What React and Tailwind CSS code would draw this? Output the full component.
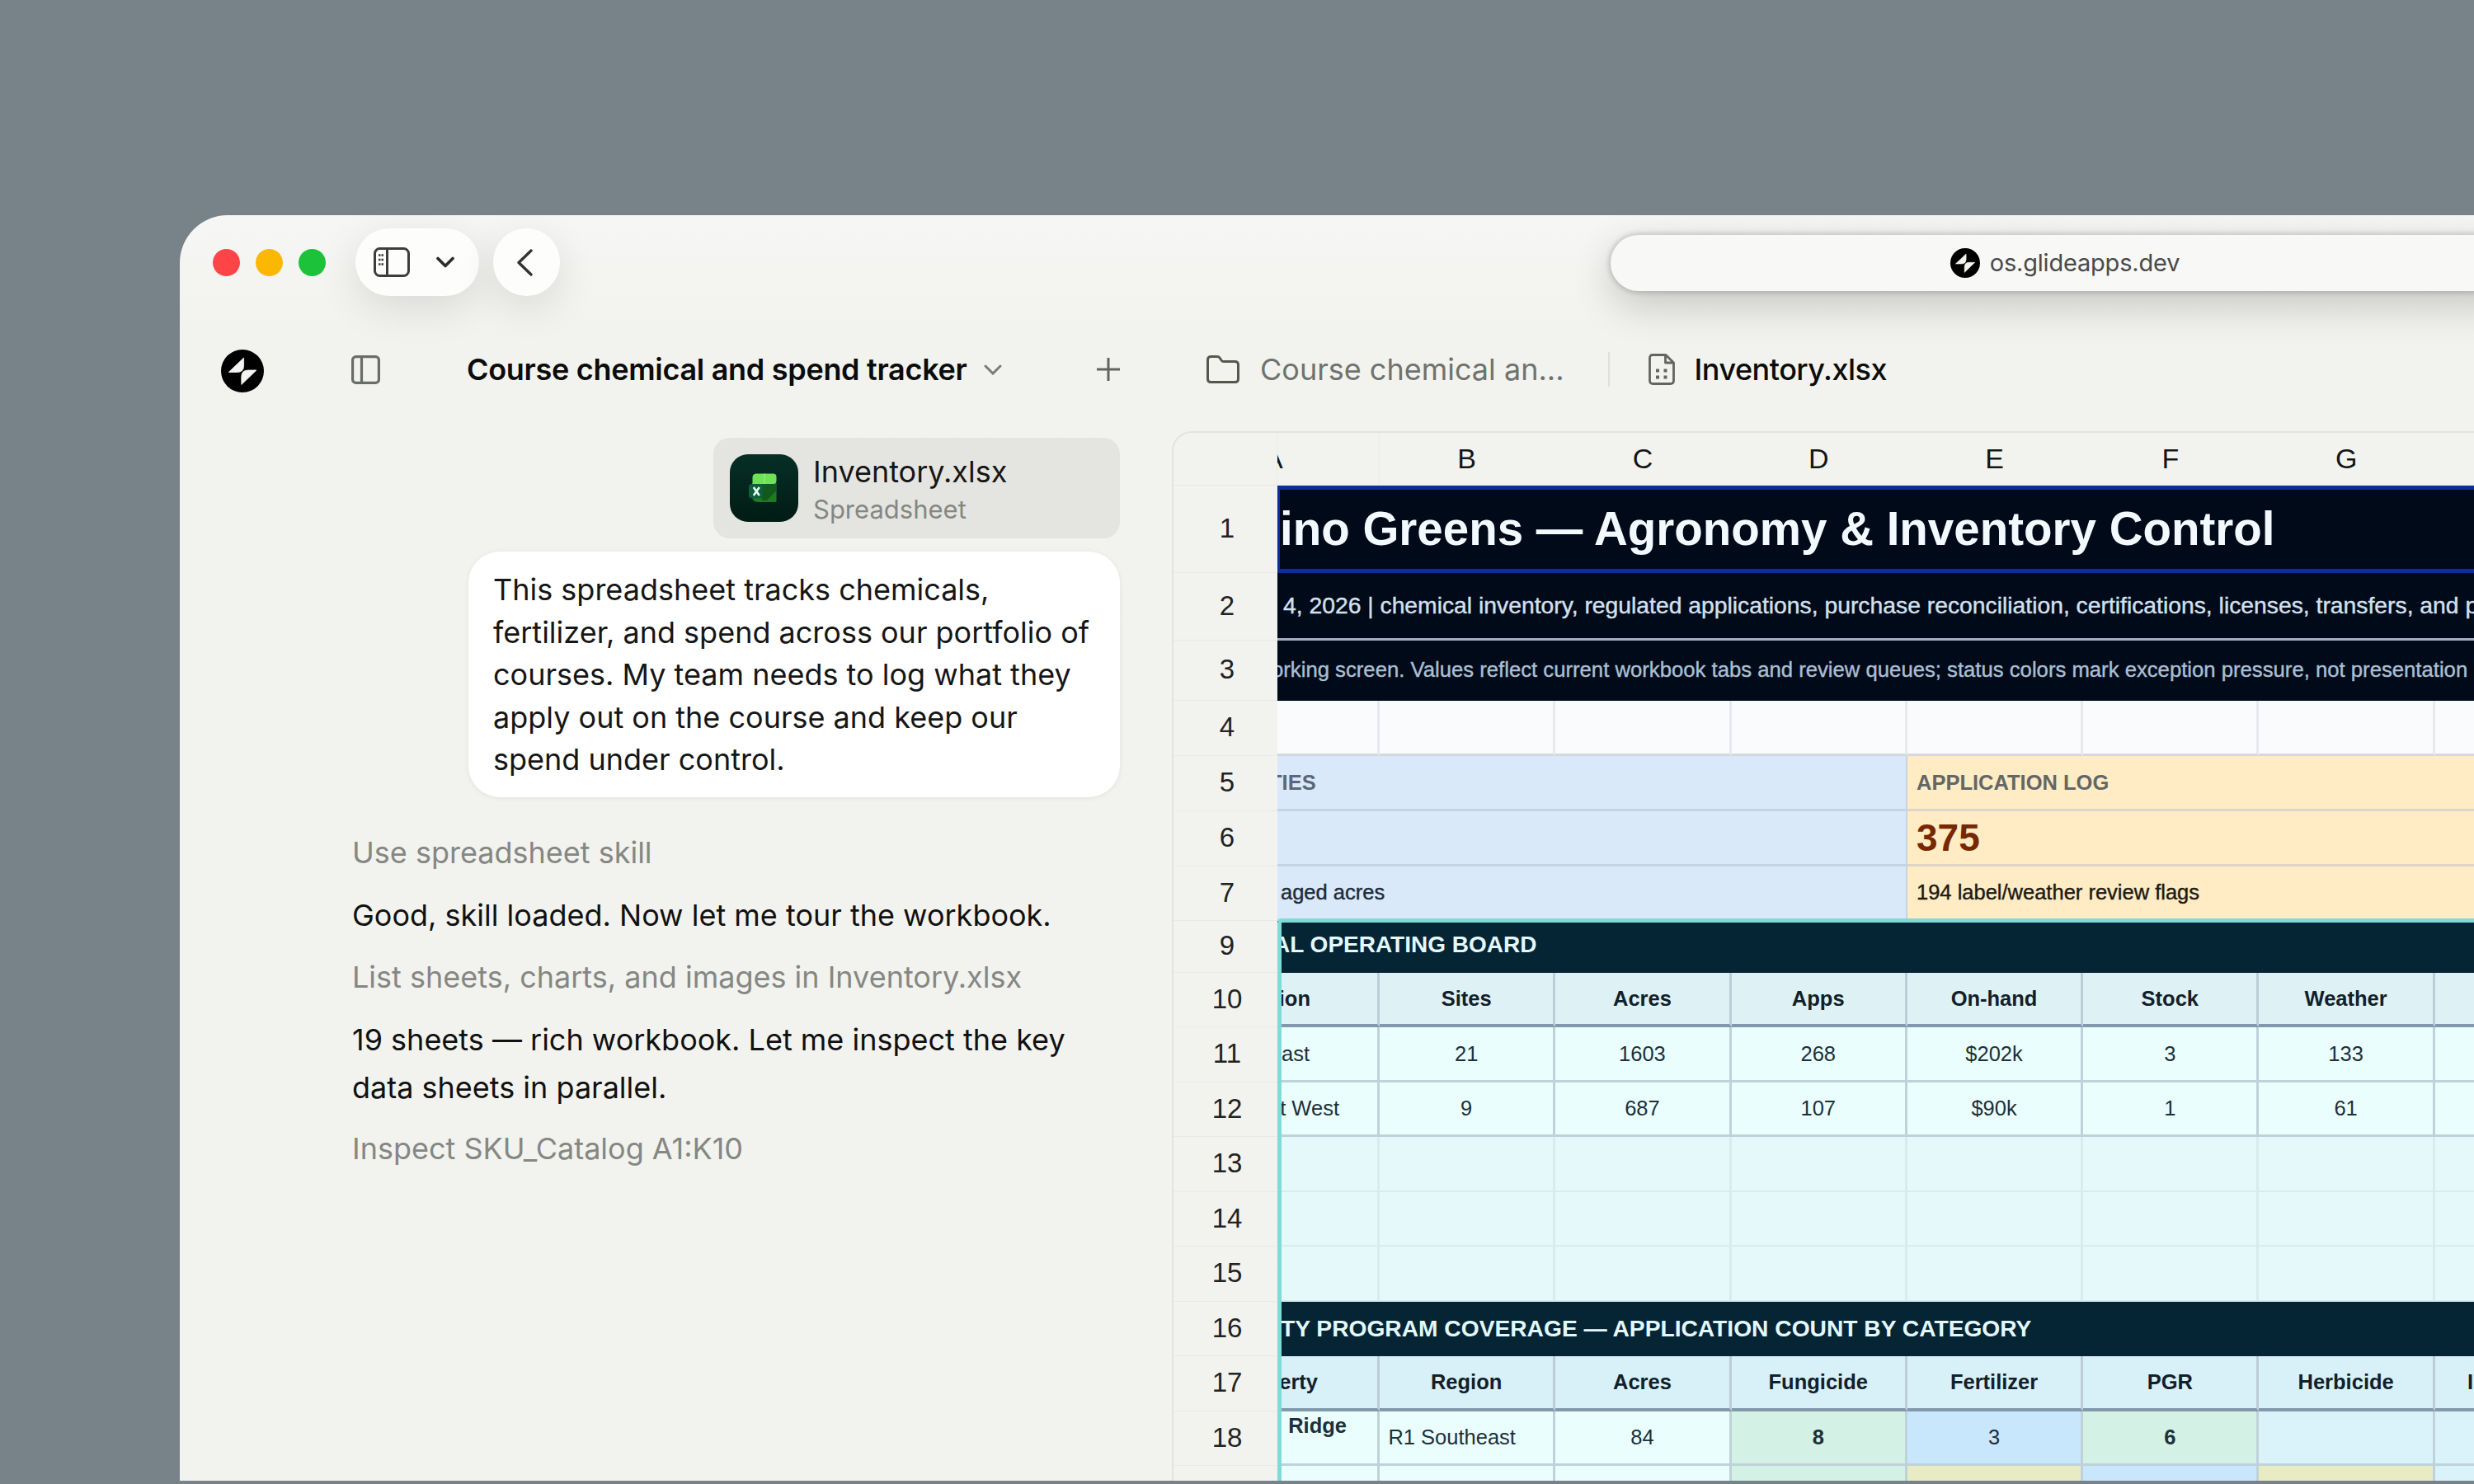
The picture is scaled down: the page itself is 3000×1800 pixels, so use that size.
import React from 'react';

// Lightning mark in a disc, used as favicon and as the app logo
const GlideMark = ({ className }) => (
  <svg viewBox="0 0 52 52" className={className}>
    <circle cx="26" cy="26" r="26" fill="#000" />
    <path d="M27.600 10v9.500q0 8-8 8H9.200Z" fill="#f4f5f1" stroke="#f4f5f1" strokeWidth=".8" strokeLinejoin="round" />
    <path d="M24.800 42.500v-9.500q0-8 8-8H43Z" fill="#f4f5f1" stroke="#f4f5f1" strokeWidth=".8" strokeLinejoin="round" />
  </svg>
);

const ExcelIcon = () => (
  <svg viewBox="0 0 34 36" className="w-[34px] h-[36px]">
    <defs>
      <linearGradient id="xlBody" x1="0" y1="0" x2="1" y2="1">
        <stop offset="0" stopColor="#1c7f2c" />
        <stop offset="1" stopColor="#1f7a22" />
      </linearGradient>
    </defs>
    <path d="M4 12h29.500v21.500q0 1.500-1.500 1.500H11q-7 0-7-7Z" fill="url(#xlBody)" />
    <path d="M16 13h17.500v8L22 33h-6Z" fill="#12591f" />
    <path d="M4.500 5q0-4.500 5-4.500h20q4 0 4 4v4.500q0 4-4 4h-25Z" fill="#6fe255" />
    <path d="M19 .5V13" stroke="#a0f57c" strokeWidth="1" />
    <rect x="0" y="13" width="17.500" height="17.500" rx="4" fill="#0d5f3a" />
    <path d="m5.800 17 7 10M12.800 17l-7 10" stroke="#e9fff2" strokeWidth="2.600" />
  </svg>
);

const BrowserBar = () => (
  <div className="h-[115px] flex shrink-0 pt-4">
    <div className="flex items-center h-[82px] pl-[40px]">
      <div className="flex gap-[19px]">
        <span className="w-[33px] h-[33px] rounded-full bg-[#fd4548]" />
        <span className="w-[33px] h-[33px] rounded-full bg-[#fbb803]" />
        <span className="w-[33px] h-[33px] rounded-full bg-[#1bc23a]" />
      </div>
      <div className="ml-[36px] w-[150px] h-[82px] rounded-full bg-[#fdfdfc] shadow-[0_14px_50px_rgba(0,0,0,0.11)] flex items-center pl-[22px]">
        <svg viewBox="0 0 44 36" className="w-[44px] h-[36px]" fill="none" stroke="#3d3d3d" strokeWidth="3">
          <rect x="1.500" y="1.500" width="41" height="33" rx="6" />
          <path d="M16.500 2v32" />
          <path d="M6 9.500h6M6 15h6M6 20.500h6" strokeWidth="2.400" strokeDasharray="2.500 1" />
        </svg>
        <svg viewBox="0 0 22 14" className="w-[22px] h-[14px] ml-[32px]" fill="none" stroke="#2b2b2b" strokeWidth="3.600" strokeLinecap="round" strokeLinejoin="round">
          <path d="m2 2.500 9 9 9-9" />
        </svg>
      </div>
      <div className="ml-[17px] w-[81px] h-[82px] rounded-full bg-[#fdfdfc] shadow-[0_14px_50px_rgba(0,0,0,0.11)] flex items-center justify-center pr-1.5">
        <svg viewBox="0 0 20 33" className="w-[20px] h-[33px]" fill="none" stroke="#333" strokeWidth="3.400" strokeLinecap="round" strokeLinejoin="round">
          <path d="M18 2 3 16.500 18 31" />
        </svg>
      </div>
    </div>
    <div className="ml-[1274px] mt-2 w-[1102px] h-[68px] shrink-0 rounded-full bg-[#f8f8f6] shadow-[0_0_5px_3px_rgba(0,0,0,0.13),0_16px_50px_rgba(0,0,0,0.20)] flex items-center justify-center gap-[12px]">
      <GlideMark className="w-[36px] h-[36px]" />
      <span className="text-[29px] tracking-[-0.2px] text-[#4a4a4a]">os.glideapps.dev</span>
    </div>
  </div>
);

const Attachment = () => (
  <div className="self-end w-[493px] h-[122px] rounded-[20px] bg-[#e4e5e1] flex items-center pl-[20px]">
    <div className="w-[83px] h-[82px] rounded-[22px] bg-gradient-to-b from-[#062f26] to-[#011c14] flex items-center justify-center pr-1">
      <ExcelIcon />
    </div>
    <div className="ml-[18px] pt-1 flex flex-col">
      <span className="text-[36px] leading-[47px] text-[#161616]">Inventory.xlsx</span>
      <span className="text-[31px] leading-[44px] text-[#858783]">Spreadsheet</span>
    </div>
  </div>
);

const bubbleLines = [
  'This spreadsheet tracks chemicals,',
  'fertilizer, and spend across our portfolio of',
  'courses. My team needs to log what they',
  'apply out on the course and keep our',
  'spend under control.',
];

const ChatPane = () => (
  <div className="w-[1203px] shrink-0 flex flex-col">
    <div className="h-[147px] flex items-center pb-[3px]">
      <GlideMark className="w-[52px] h-[52px] ml-[50px] mt-[3px]" />
      <svg viewBox="0 0 35 35" className="w-[35px] h-[35px] ml-[106px]" fill="none" stroke="#6a6c67" strokeWidth="3.200">
        <rect x="1.600" y="1.600" width="31.800" height="31.800" rx="4" />
        <path d="M12.500 2v31" />
      </svg>
      <span className="ml-[105px] text-[36px] tracking-[-0.3px] font-semibold text-[#0c0c0c] whitespace-nowrap">Course chemical and spend tracker</span>
      <svg viewBox="0 0 22 13" className="w-[22px] h-[13px] ml-[20px]" fill="none" stroke="#7a7c77" strokeWidth="3" strokeLinecap="round">
        <path d="m2 2 9 9 9-9" />
      </svg>
      <svg viewBox="0 0 28 28" className="w-[28px] h-[28px] ml-auto mr-[63px]" fill="none" stroke="#62645f" strokeWidth="3">
        <path d="M14 0v28M0 14h28" />
      </svg>
    </div>
    <div className="flex flex-col pl-[209px] pr-[63px] pt-2">
      <Attachment />
      <div className="self-end mt-[16px] w-[790px] h-[298px] rounded-[38px] bg-white shadow-[0_1px_6px_rgba(0,0,0,0.07)] pl-[30px] pt-[21px] text-[36px] leading-[51.5px] text-[#161616] whitespace-nowrap">
        {bubbleLines.map((line) => (
          <div key={line}>{line}</div>
        ))}
      </div>
      <div className="mt-[38px] text-[36px] leading-[58px] text-[#111] whitespace-nowrap">
        <p className="text-[#858783]">Use spreadsheet skill</p>
        <p className="mt-[18px]">Good, skill loaded. Now let me tour the workbook.</p>
        <p className="mt-[17px] text-[#858783]">List sheets, charts, and images in Inventory.xlsx</p>
        <p className="mt-[18px]">19 sheets — rich workbook. Let me inspect the key</p>
        <p>data sheets in parallel.</p>
        <p className="mt-[16px] text-[#858783]">Inspect SKU_Catalog A1:K10</p>
      </div>
    </div>
  </div>
);

const Tabs = () => (
  <div className="h-[147px] shrink-0 flex items-center pl-[42px] pb-[3px]">
    <svg viewBox="0 0 40 34" className="w-[40px] h-[34px]" fill="none" stroke="#55574f" strokeWidth="3" strokeLinejoin="round">
      <path d="M1.500 5.500q0-4 4-4h7.500q2 0 3 1.500l2 3q1 1.500 3 1.500h13.500q4 0 4 4v17q0 4-4 4h-29q-4 0-4-4Z" />
    </svg>
    <span className="ml-[25px] text-[36px] text-[#70726d] whitespace-nowrap">Course chemical an...</span>
    <span className="ml-[53px] w-[2px] h-[42px] bg-[#dfe0dc]" />
    <svg viewBox="0 0 32 38" className="w-[32px] h-[38px] ml-[47px]" fill="none" stroke="#62645f" strokeWidth="2.800" strokeLinejoin="round">
      <path d="M5 1.500h16l9.500 9.500v21.500q0 4-4 4h-21q-4 0-4-4v-27q0-4 3.500-4Z" />
      <path d="M20.500 1.500v9.500h10" />
      <path d="M9 20.500h4M18.500 20.500h4M9 28.500h4M18.500 28.500h4" strokeWidth="4" />
    </svg>
    <span className="ml-[24px] text-[36px] tracking-[-0.5px] font-medium text-[#0c0c0c] whitespace-nowrap">Inventory.xlsx</span>
  </div>
);

const RowNumber = ({ children, height }) => (
  <div className={`${height} w-[126px] shrink-0 border-b border-[#e9eae5] flex items-center justify-center text-[33px] text-[#222] pl-1 pb-[2px]`}>
    {children}
  </div>
);

const Row = ({ n, height, className = '', children }) => (
  <div className={`flex shrink-0 ${height}`}>
    <RowNumber height={height}>{n}</RowNumber>
    <div className={`w-[1500px] shrink-0 flex items-center overflow-hidden whitespace-nowrap ${className}`}>{children}</div>
  </div>
);

// First column is scrolled, so only its right part is visible
const cellsFor = (cells, cellClass, fill) =>
  cells.map((c, i) => {
    const cell = typeof c === 'string' ? { t: c } : c;
    return (
      <div
        key={i}
        className={`h-full shrink-0 flex items-center overflow-hidden border-r-[3px] ${i === 0 ? 'w-[124px] justify-end' : 'w-[213.3px] justify-center'} ${cellClass} ${cell.bg || fill} ${cell.c || ''}`}
      >
        {cell.t}
      </div>
    );
  });

const head = 'border-[#bccdd8] font-bold text-[#12202b] border-b-[4px] border-b-[#8299ab]';
const body = 'border-[#bfd2d9] border-b-[3px] text-[#1d3039]';
const blank = 'border-r-[2px] border-b-[2px] border-[#d8ecee]';
const mint = 'bg-[#eafefe]';
const green = 'bg-[#d3f1e4]';
const blue = 'bg-[#c8e7fc]';
const sand = 'bg-[#e9ebc5]';
const ice = 'bg-[#daf3fb]';

const SummaryRow = ({ n, height, left, right }) => (
  <Row n={n} height={height}>
    <div className="w-[764px] h-full shrink-0 flex items-center overflow-hidden bg-[#d9e9fa] border-r-2 border-b-[3px] border-[#c6d3e4]">{left}</div>
    <div className="w-[736px] h-full shrink-0 flex items-center pl-[11px] bg-[#ffebc4] border-b-[3px] border-[#ddd5c8]">{right}</div>
  </Row>
);

const Sheet = () => (
  <div className="w-[1700px] flex-1 flex flex-col overflow-hidden rounded-tl-[24px] border-t-2 border-l-2 border-[#e3e4df] font-['Liberation_Sans',Arial,sans-serif] text-[25.5px]">
    <div className="h-[64px] shrink-0 flex border-b border-[#e9eae5]">
      <div className="w-[126px] shrink-0 border-r border-[#ebece8]" />
      <div className="flex items-center text-[34px] text-[#151515] overflow-hidden">
        <div className="w-[124px] shrink-0 h-full border-r border-[#ebece8] flex items-center overflow-hidden">
          <span className="-ml-[16px]">A</span>
        </div>
        {['B', 'C', 'D', 'E', 'F', 'G', 'H'].map((c) => (
          <div key={c} className="w-[213.3px] shrink-0 text-center -ml-[1px] mr-[1px]">{c}</div>
        ))}
      </div>
    </div>

    <Row n="1" height="h-[106px]" className="bg-[#010a19] border-y-[5px] border-l-[3px] border-[#0b2f98] text-[#f3faff]">
      <span className="text-[56.5px] font-bold">ino Greens — Agronomy &amp; Inventory Control</span>
    </Row>
    <Row n="2" height="h-[82px]" className="bg-[#010a19] border-b-[3px] border-[#a4acbe] text-[#d3e0ee]">
      <span className="text-[28.3px] ml-[7px] [-webkit-text-stroke:0.4px]">4, 2026 | chemical inventory, regulated applications, purchase reconciliation, certifications, licenses, transfers, and purchase</span>
    </Row>
    <Row n="3" height="h-[73px]" className="bg-[#010a19] text-[#a9bfd2]">
      <span className="text-[25.7px] -ml-[7px] pb-[2px] [-webkit-text-stroke:0.4px]">orking screen. Values reflect current workbook tabs and review queues; status colors mark exception pressure, not presentation</span>
    </Row>
    <Row n="4" height="h-[67px]">{cellsFor(['', '', '', '', '', '', '', ''], 'border-r-[2px] border-[#e8e9ec] border-b-[3px] border-b-[#d5d7de]', 'bg-[#fafbfd]')}</Row>
    <SummaryRow
      n="5"
      height="h-[67px]"
      left={<span className="font-bold text-[#5d6778] -ml-[10px]">TIES</span>}
      right={<span className="font-bold text-[#626766]">APPLICATION LOG</span>}
    />
    <SummaryRow n="6" height="h-[67px]" right={<span className="text-[46px] font-bold text-[#782800]">375</span>} />
    <SummaryRow
      n="7"
      height="h-[66px]"
      left={<span className="text-[#202a38] ml-[4px] [-webkit-text-stroke:0.4px]">aged acres</span>}
      right={<span className="text-[#1c1a12] [-webkit-text-stroke:0.4px]">194 label/weather review flags</span>}
    />

    <div className="relative">
      <Row n="9" height="h-[62.5px]" className="bg-[#052535] text-[28px] font-bold text-[#e4f8fb]">
        <span className="-ml-[5px] pb-[4px]">AL OPERATING BOARD</span>
      </Row>
      <Row n="10" height="h-[66.5px]">
        {cellsFor([{ t: 'Region', c: 'pr-[81px]' }, 'Sites', 'Acres', 'Apps', 'On-hand', 'Stock', 'Weather', ''], head, 'bg-[#def2f5]')}
      </Row>
      <Row n="11" height="h-[66.5px]">
        {cellsFor([{ t: 'Southeast', c: 'pr-[82px]' }, '21', '1603', '268', '$202k', '3', '133', ''], body, mint)}
      </Row>
      <Row n="12" height="h-[66.5px]">
        {cellsFor([{ t: 't West', c: 'pr-[46px]' }, '9', '687', '107', '$90k', '1', '61', ''], body, mint)}
      </Row>
      {['13', '14', '15'].map((n) => (
        <Row key={n} n={n} height="h-[66.5px]">{cellsFor(['', '', '', '', '', '', '', ''], blank, 'bg-[#e5f9fb]')}</Row>
      ))}
      <Row n="16" height="h-[66.5px]" className="bg-[#052535] text-[28.2px] font-bold text-[#e4f8fb]">
        <span className="ml-[4px] pb-[2px]">TY PROGRAM COVERAGE — APPLICATION COUNT BY CATEGORY</span>
      </Row>
      <Row n="17" height="h-[66.5px]">
        {cellsFor([{ t: 'Property', c: 'pr-[72px]' }, 'Region', 'Acres', 'Fungicide', 'Fertilizer', 'PGR', 'Herbicide', 'Insecticide'], head, 'bg-[#d8f0f8]')}
      </Row>
      <Row n="18" height="h-[66.5px]">
        {cellsFor([
          { t: 'Ridge', c: 'pr-[37px] pb-[28px] font-bold' },
          { t: 'R1 Southeast', c: 'pr-[35px]' },
          '84',
          { t: '8', bg: green, c: 'font-bold' },
          { t: '3', bg: blue },
          { t: '6', bg: green, c: 'font-bold' },
          { t: '', bg: ice },
          { t: '', bg: ice },
        ], body, mint)}
      </Row>
      <Row n="19" height="h-[66.5px]">
        {cellsFor(['', '', '', { t: '', bg: green }, { t: '', bg: sand }, { t: '', bg: blue }, { t: '', bg: sand }, { t: '', bg: ice }], body, mint)}
      </Row>
      {/* selection outline */}
      <div className="absolute left-[126px] -top-[3px] w-[1600px] h-[800px] border-l-[5px] border-t-[5px] border-[#80dad8] rounded-tl-[6px]" />
    </div>
  </div>
);

const App = () => (
  <div className="w-[3000px] h-[1800px] overflow-hidden bg-[#778388] pt-[261px] pl-[218px] font-['Inter',sans-serif]">
    <div className="w-[2900px] h-[1535px] rounded-tl-[58px] bg-gradient-to-b from-[#f6f6f5] from-0% to-[#f2f3ee] to-[9%] overflow-hidden flex flex-col">
      <BrowserBar />
      <div className="flex flex-1 min-h-0">
        <ChatPane />
        <div className="flex flex-col min-h-0">
          <Tabs />
          <Sheet />
        </div>
      </div>
    </div>
  </div>
);

export default App;
